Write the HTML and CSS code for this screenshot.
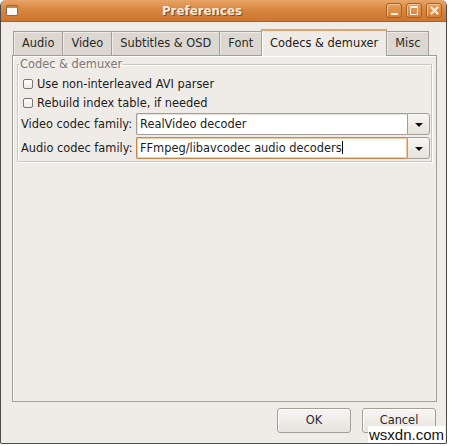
FILE: index.html
```html
<!DOCTYPE html>
<html>
<head>
<meta charset="utf-8">
<title>Preferences</title>
<link rel="stylesheet" href="styles.css">
</head>
<body>
<div class="window">
  <div class="titlebar">
    <div class="winicon"><span class="wi-bar"></span></div>
    <div class="title">Preferences</div>
    <div class="wbtns">
      <span class="wb"><span class="g-min"></span></span>
      <span class="wb"><span class="g-max"></span></span>
      <span class="wb"><svg width="9" height="9" viewBox="0 0 9 9"><path d="M1.5 1.5 L7.5 7.5 M7.5 1.5 L1.5 7.5" stroke="#fbeee0" stroke-width="2.2" stroke-linecap="round"/></svg></span>
    </div>
  </div>
  <div class="content">
    <div class="notebook">
      <div class="tabs">
        <div class="tab first">Audio</div>
        <div class="tab">Video</div>
        <div class="tab">Subtitles &amp; OSD</div>
        <div class="tab">Font</div>
        <div class="tab active">Codecs &amp; demuxer</div>
        <div class="tab">Misc</div>
      </div>
      <div class="panel">
        <fieldset class="frame">
          <legend>Codec &amp; demuxer</legend>
          <div class="check"><span class="box"></span><span>Use non-interleaved AVI parser</span></div>
          <div class="check"><span class="box"></span><span>Rebuild index table, if needed</span></div>
          <div class="row">
            <span class="lbl">Video codec family:</span>
            <div class="combo">
              <div class="entry">RealVideo decoder</div>
              <div class="drop"><span class="arrow"></span></div>
            </div>
          </div>
          <div class="row">
            <span class="lbl">Audio codec family:</span>
            <div class="combo">
              <div class="entry focus">FFmpeg/libavcodec audio decoders<span class="caret"></span></div>
              <div class="drop"><span class="arrow"></span></div>
            </div>
          </div>
        </fieldset>
      </div>
    </div>
    <div class="buttons">
      <div class="btn">OK</div>
      <div class="btn">Cancel</div>
    </div>
  </div>
  <div class="watermark">wsxdn.com</div>
</div>
</body>
</html>
```
FILE: styles.css
```css
html, body {
  margin: 0;
  padding: 0;
  background: #ffffff;
}
body {
  width: 450px;
  height: 446px;
  overflow: hidden;
  font-family: "DejaVu Sans", sans-serif;
  font-size: 11.4px;
  color: #1c1c1c;
}
.window {
  position: relative;
  width: 447px;
  height: 444px;
  box-sizing: border-box;
  background: #efebe7;
  border: 1px solid #4e4a46;
  border-top: none;
  border-radius: 6px 6px 2px 2px;
  display: flex;
  flex-direction: column;
  overflow: hidden;
}
.titlebar {
  height: 22px;
  flex: none;
  display: flex;
  align-items: center;
  background: linear-gradient(#e8a567, #d9863f 45%, #cb7530);
  border-bottom: 1px solid #a8611f;
  box-sizing: border-box;
  padding: 0 4px 0 5px;
}
.winicon {
  width: 12px;
  height: 11px;
  box-sizing: border-box;
  background: #fbfaf8;
  border: 1px solid #8a6a4d;
  border-radius: 1px;
  display: flex;
  flex-direction: column;
}
.wi-bar {
  height: 2px;
  background: #c8894f;
}
.title {
  flex: 1;
  text-align: center;
  font-weight: bold;
  font-size: 11.7px;
  color: #f6ebe0;
  text-shadow: 1px 1px 0 #8c4e17;
  letter-spacing: 0.1px;
}
.wbtns {
  display: flex;
  gap: 4px;
}
.wb {
  width: 16px;
  height: 15px;
  box-sizing: border-box;
  border: 1px solid #a86020;
  border-radius: 3px;
  background: linear-gradient(#e49c5c, #d5823b);
  box-shadow: inset 1px 1px 0 rgba(255, 225, 190, 0.6);
  display: flex;
  align-items: center;
  justify-content: center;
}
.g-min {
  width: 7px;
  height: 2px;
  background: #fbeee0;
  margin-top: 6px;
}
.g-max {
  width: 6px;
  height: 6px;
  border: 1.5px solid #fbeee0;
  border-top-width: 2px;
}
.content {
  flex: 1;
  display: flex;
  flex-direction: column;
  padding: 7px 9px 0 11px;
}
.notebook {
  display: flex;
  flex-direction: column;
}
.tabs {
  display: flex;
  align-items: flex-end;
  height: 26px;
  padding-left: 1px;
}
.tab {
  height: 24px;
  box-sizing: border-box;
  padding: 0 8px;
  line-height: 23px;
  background: #dcd7d0;
  border: 1px solid #a39e97;
  border-bottom: none;
  margin-right: -1px;
  color: #2a2a2a;
  box-shadow: inset 1px 1px 0 #eeeae5;
}
.tab.active {
  height: 27px;
  line-height: 25px;
  background: #efebe7;
  border-top: 2px solid #e5a46e;
  position: relative;
  margin-bottom: -1px;
  z-index: 1;
  box-shadow: inset 1px 0 0 #ffffff;
  color: #1c1c1c;
}
.panel {
  height: 347px;
  box-sizing: border-box;
  border: 1px solid #a39e97;
  background: #efebe7;
  padding: 2px 4px 0 4px;
  box-shadow: inset 1px 1px 0 #ffffff;
}
.frame {
  margin: 0;
  padding: 0 1px 2px 3px;
  border: 1px solid #cbc6bf;
  box-shadow: 1px 1px 0 #ffffff, inset 1px 1px 0 #ffffff;
  min-width: 0;
}
.frame legend {
  padding: 0 1px;
  margin-left: -2px;
  line-height: 13px;
  color: #7c7873;
}
.check {
  height: 19px;
  display: flex;
  align-items: center;
  gap: 4px;
  padding-left: 2px;
}
.check:first-of-type {
  margin-top: 3px;
}
.check + .row {
  margin-top: 1px;
}
.box {
  width: 10px;
  height: 10px;
  box-sizing: border-box;
  border: 1px solid #7c7770;
  border-radius: 2px;
  background: linear-gradient(#ffffff, #ece8e3);
}
.row {
  display: flex;
  align-items: center;
  height: 22px;
}
.row + .row {
  margin-top: 2px;
}
.lbl {
  width: 115px;
  flex: none;
}
.combo {
  flex: 1;
  display: flex;
  height: 22px;
}
.entry {
  flex: 1;
  box-sizing: border-box;
  background: #ffffff;
  border: 1px solid #a39e97;
  border-right: none;
  border-radius: 2px 0 0 2px;
  padding-left: 3px;
  line-height: 20px;
  white-space: nowrap;
  box-shadow: inset 1px 1px 0 #e6e2dd;
}
.entry.focus {
  border-color: #c78750;
  box-shadow: inset 0 0 0 1px #f0c9a3;
}
.caret {
  display: inline-block;
  width: 1px;
  height: 13px;
  background: #000;
  vertical-align: -2px;
}
.drop {
  width: 23px;
  box-sizing: border-box;
  border: 1px solid #a39e97;
  border-radius: 0 3px 3px 0;
  background: linear-gradient(#f8f6f3, #e6e2dc);
  display: flex;
  align-items: center;
  justify-content: center;
}
.arrow {
  width: 0;
  height: 0;
  border-left: 4px solid transparent;
  border-right: 4px solid transparent;
  border-top: 4px solid #111;
  margin-top: 1px;
}
.buttons {
  display: flex;
  justify-content: flex-end;
  gap: 11px;
  margin-top: 6px;
  padding-right: 1px;
}
.btn {
  width: 74px;
  height: 25px;
  box-sizing: border-box;
  border: 1px solid #a39e97;
  border-radius: 3px;
  background: linear-gradient(#f7f5f2, #e7e3de);
  box-shadow: inset 1px 1px 0 #ffffff;
  text-align: center;
  line-height: 23px;
  color: #2a2a2a;
}
.watermark {
  position: absolute;
  right: 1px;
  bottom: 0;
  background: #ffffff;
  color: #111;
  font-family: "Liberation Sans", Arial, sans-serif;
  font-size: 15px;
  line-height: 17px;
  padding: 0 1px;
}
```
